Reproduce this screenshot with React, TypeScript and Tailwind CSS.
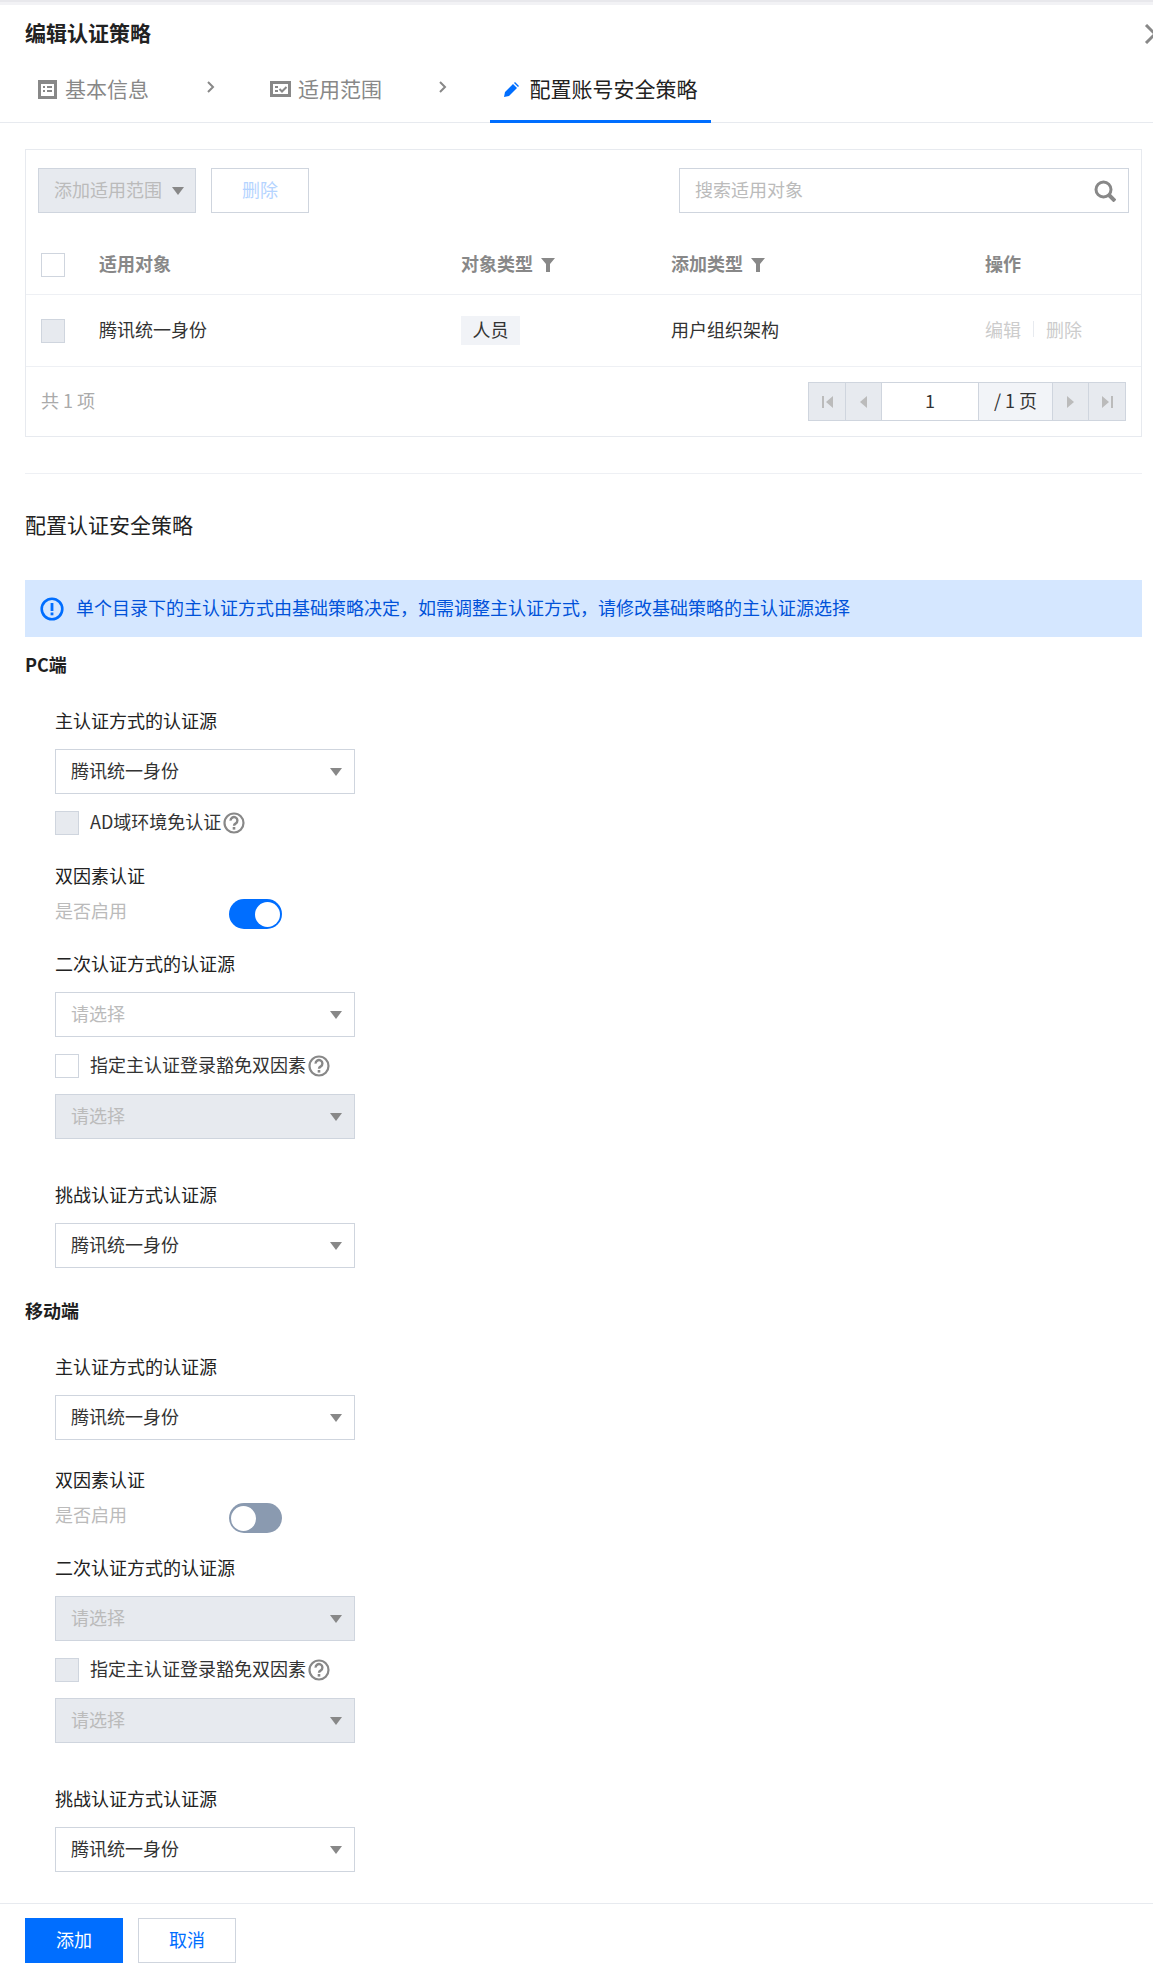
import type { ReactNode } from "react";

const font = "font-['Noto_Sans_CJK_SC','Liberation_Sans',sans-serif]";

const Caret = ({ className = "" }: { className?: string }) => (
  <svg width="12" height="8" viewBox="0 0 12 8" className={className}>
    <path d="M0 0h12L6 8z" fill="#888888" />
  </svg>
);

const Help = () => (
  <svg width="22" height="22" viewBox="0 0 22 22" className="ml-[2px] shrink-0">
    <circle cx="11" cy="11" r="9.5" fill="none" stroke="#888888" strokeWidth="2.2" />
    <path d="M7.6 8.6a3.4 3.4 0 1 1 5.2 2.8c-1.2.7-1.8 1.2-1.8 2.4" fill="none" stroke="#888888" strokeWidth="2.4" />
    <rect x="9.7" y="15" width="2.6" height="2.6" fill="#888888" />
  </svg>
);

const Filter = () => (
  <svg width="14" height="14" viewBox="0 0 14 14" className="ml-[8px] mt-[3px]">
    <path d="M0 0h14L9 6v8H5V6z" fill="#888888" />
  </svg>
);

const Checkbox = ({ disabled = false }: { disabled?: boolean }) => (
  <div className={`w-[24px] h-[24px] border border-[#cfd5de] shrink-0 ${disabled ? "bg-[#e7eaef]" : "bg-white"}`} />
);

const Select = ({ value, placeholder, disabled, className = "" }: { value?: string; placeholder?: string; disabled?: boolean; className?: string }) => (
  <div className={`w-[300px] h-[45px] border border-[#cfd5de] flex items-center justify-between pl-[15px] pr-[12px] ${disabled ? "bg-[#e7eaef]" : "bg-white"} ${className}`}>
    <span className={`pb-[3px] ${value ? "text-[#333333]" : "text-[#bbbbbb]"}`}>{value ?? placeholder}</span>
    <Caret />
  </div>
);

const Label = ({ children, className = "" }: { children: ReactNode; className?: string }) => (
  <div className={`h-[26px] leading-[23px] text-[#222222] ${className}`}>{children}</div>
);

const Section = ({ children, className = "" }: { children: ReactNode; className?: string }) => (
  <div className={`h-[26px] leading-[23px] font-bold text-[#1f1f1f] ${className}`}>{children}</div>
);

const Toggle = ({ on }: { on?: boolean }) => (
  <div className={`w-[53px] h-[30px] rounded-full flex items-center px-[2px] ${on ? "bg-[#006eff] justify-end" : "bg-[#8a9ab0] justify-start"}`}>
    <div className="w-[25px] h-[25px] rounded-full bg-white" />
  </div>
);

const ToggleRow = ({ on }: { on?: boolean }) => (
  <div className="mt-[9px] h-[30px] flex">
    <span className="w-[174px] text-[#bbbbbb] leading-[23px]">是否启用</span>
    <Toggle on={on} />
  </div>
);

const CheckRow = ({ text, disabled, className = "" }: { text: string; disabled?: boolean; className?: string }) => (
  <div className={`flex items-center h-[24px] ${className}`}>
    <Checkbox disabled={disabled} />
    <span className="ml-[11px] pb-[3px] text-[#333333]">{text}</span>
    <Help />
  </div>
);

const PagerBtn = ({ children, className = "" }: { children: ReactNode; className?: string }) => (
  <div className={`h-full flex items-center justify-center bg-[#e7eaef] border-r border-[#cfd5de] ${className}`}>{children}</div>
);

const StepChevron = ({ className = "" }: { className?: string }) => (
  <div className={`h-[52px] flex items-center ${className}`}>
    <svg width="8" height="12" viewBox="0 0 8 12" className="-mt-[4px]">
      <path d="M1 1l5 5-5 5" fill="none" stroke="#888888" strokeWidth="2" />
    </svg>
  </div>
);

export default function App() {
  return (
    <div className={`${font} w-[1153px] h-[1971px] overflow-hidden bg-white text-[18px]`}>
      <div className="h-[5px] bg-[#f2f2f5] border-t-2 border-[#e8e8ec]" />

      {/* Header */}
      <div className="h-[58px] pl-[25px] flex items-center justify-between">
        <h1 className="text-[21px] font-bold text-[#222222] pb-[2px]">编辑认证策略</h1>
        <svg width="18" height="20" viewBox="0 0 18 20" className="-mr-[9px]">
          <path d="M2 1l9 9-9 9" fill="none" stroke="#888888" strokeWidth="3" />
        </svg>
      </div>

      {/* Steps */}
      <div className="h-[60px] border-b border-[#e7eaef] flex text-[21px] pl-[38px]">
        <div className="flex items-center h-[52px] text-[#888888]">
          <svg width="19" height="19" viewBox="0 0 19 19" className="mr-[8px]">
            <path d="M0 0h19v19H0z" fill="#888888" />
            <path d="M3 4h13v12H3z" fill="#fff" />
            <path d="M5 6h2v2H5zM9 6h5v2H9zM5 10h2v2H5zM9 10h5v2H9z" fill="#888888" />
          </svg>
          基本信息
        </div>
        <StepChevron className="ml-[58px] mr-[55px]" />
        <div className="flex items-center h-[52px] text-[#888888]">
          <svg width="21" height="16" viewBox="0 0 21 16" className="mr-[7px]">
            <path d="M0 0h21v16H0z" fill="#888888" />
            <path d="M3 3h15v10H3z" fill="#fff" />
            <path d="M5 5h3v2H5zM5 9h3v2H5z" fill="#888888" />
            <path d="M9.5 8l2.5 2.5L16.5 6" fill="none" stroke="#888888" strokeWidth="2" />
          </svg>
          适用范围
        </div>
        <StepChevron className="ml-[57px] mr-[43px]" />
        <div className="w-[221px] h-[60px] border-b-[3px] border-[#006eff] pb-[5px] flex items-center justify-center text-[#222222]">
          <svg width="16" height="15" viewBox="0 0 16 15" className="mr-[10px]">
            <path d="M0 15l1-5 8-8 4 4-8 8zM10 1l1-1 4 4-1 1z" fill="#006eff" />
          </svg>
          配置账号安全策略
        </div>
      </div>

      <div className="pl-[25px] pr-[11px]">
        {/* Table card */}
        <div className="mt-[26px] border border-[#e7eaef] h-[288px]">
          <div className="mt-[18px] px-[12px] flex justify-between">
            <div className="flex">
              <div className="w-[158px] h-[45px] bg-[#e7eaef] border border-[#cfd5de] flex items-center pl-[15px] text-[#bbbbbb]">
                <span className="pb-[3px]">添加适用范围</span>
                <Caret className="ml-[10px]" />
              </div>
              <div className="ml-[15px] w-[98px] h-[45px] border border-[#cfd5de] flex items-center justify-center text-[#b5d4ff] pb-[3px]">删除</div>
            </div>
            <div className="w-[450px] h-[45px] border border-[#cfd5de] flex items-center justify-between pl-[15px] pr-[12px] text-[#bbbbbb]">
              <span className="pb-[3px]">搜索适用对象</span>
              <svg width="22" height="22" viewBox="0 0 22 22">
                <circle cx="9.5" cy="9.5" r="7.5" fill="none" stroke="#888888" strokeWidth="3" />
                <path d="M15 15l6 6" stroke="#888888" strokeWidth="4" />
              </svg>
            </div>
          </div>

          <div className="mt-[23px] h-[59px] border-b border-[#eef0f4] px-[15px] grid grid-cols-[58px_362px_210px_314px_1fr] items-center font-bold text-[#888888]">
            <Checkbox />
            <span className="pb-[3px]">适用对象</span>
            <span className="pb-[3px] flex items-center">对象类型<Filter /></span>
            <span className="pb-[3px] flex items-center">添加类型<Filter /></span>
            <span className="pb-[3px]">操作</span>
          </div>

          <div className="h-[72px] border-b border-[#eef0f4] px-[15px] grid grid-cols-[58px_362px_210px_314px_1fr] items-center text-[#333333]">
            <Checkbox disabled />
            <span className="pb-[3px]">腾讯统一身份</span>
            <span className="w-[59px] h-[29px] bg-[#f1f3f7] flex items-center justify-center pb-[3px]">人员</span>
            <span className="pb-[3px]">用户组织架构</span>
            <span className="pb-[3px] flex items-center text-[#cccccc]">
              编辑
              <span className="mx-[12px] w-px h-[16px] bg-[#e7eaef]" />
              删除
            </span>
          </div>

          <div className="h-[69px] pl-[15px] pr-[15px] flex items-center justify-between">
            <span className="text-[#aaaaaa] pb-[3px]">共 1 项</span>
            <div className="h-[39px] flex border border-[#cfd5de]">
              <PagerBtn className="w-[37px]">
                <svg width="11" height="12" viewBox="0 0 11 12"><path d="M0 0h2v12H0zM11 0v12L4 6z" fill="#bbbbbb" /></svg>
              </PagerBtn>
              <PagerBtn className="w-[36px]">
                <svg width="7" height="12" viewBox="0 0 7 12"><path d="M7 0v12L0 6z" fill="#bbbbbb" /></svg>
              </PagerBtn>
              <div className="w-[97px] h-full flex items-center justify-center bg-white border-r border-[#cfd5de] text-[#333333] pb-[2px]">1</div>
              <div className="w-[74px] h-full flex items-center justify-center bg-[#f2f4f8] border-r border-[#cfd5de] text-[#333333] pb-[2px]">/ 1 页</div>
              <PagerBtn className="w-[36px]">
                <svg width="7" height="12" viewBox="0 0 7 12"><path d="M0 0v12l7-6z" fill="#bbbbbb" /></svg>
              </PagerBtn>
              <PagerBtn className="w-[36px] border-r-0">
                <svg width="11" height="12" viewBox="0 0 11 12"><path d="M11 0H9v12h2zM0 0v12l7-6z" fill="#bbbbbb" /></svg>
              </PagerBtn>
            </div>
          </div>
        </div>

        <div className="mt-[36px] border-t border-[#eef0f4]" />
        <div className="mt-[35px] h-[30px] leading-[30px] text-[21px] text-[#222222]">配置认证安全策略</div>

        {/* Notice */}
        <div className="mt-[41px] h-[57px] bg-[#d5e7ff] flex items-center pl-[15px] text-[#0052d9]">
          <svg width="24" height="24" viewBox="0 0 24 24" className="mr-[12px]">
            <circle cx="12" cy="12" r="10.3" fill="none" stroke="#006eff" strokeWidth="2.6" />
            <rect x="10.6" y="6" width="2.8" height="8" fill="#006eff" />
            <rect x="10.6" y="15.5" width="2.8" height="2.8" fill="#006eff" />
          </svg>
          <span className="pb-[3px]">单个目录下的主认证方式由基础策略决定，如需调整主认证方式，请修改基础策略的主认证源选择</span>
        </div>

        {/* PC */}
        <Section className="mt-[16px]">PC端</Section>
        <div className="pl-[30px]">
          <Label className="mt-[30px]">主认证方式的认证源</Label>
          <Select value="腾讯统一身份" className="mt-[14px]" />
          <CheckRow text="AD域环境免认证" disabled className="mt-[17px]" />
          <Label className="mt-[29px]">双因素认证</Label>
          <ToggleRow on />
          <Label className="mt-[23px]">二次认证方式的认证源</Label>
          <Select placeholder="请选择" className="mt-[14px]" />
          <CheckRow text="指定主认证登录豁免双因素" className="mt-[17px]" />
          <Select placeholder="请选择" disabled className="mt-[16px]" />
          <Label className="mt-[44px]">挑战认证方式认证源</Label>
          <Select value="腾讯统一身份" className="mt-[14px]" />
        </div>

        {/* Mobile */}
        <Section className="mt-[31px]">移动端</Section>
        <div className="pl-[30px]">
          <Label className="mt-[30px]">主认证方式的认证源</Label>
          <Select value="腾讯统一身份" className="mt-[14px]" />
          <Label className="mt-[28px]">双因素认证</Label>
          <ToggleRow />
          <Label className="mt-[23px]">二次认证方式的认证源</Label>
          <Select placeholder="请选择" disabled className="mt-[14px]" />
          <CheckRow text="指定主认证登录豁免双因素" disabled className="mt-[17px]" />
          <Select placeholder="请选择" disabled className="mt-[16px]" />
          <Label className="mt-[44px]">挑战认证方式认证源</Label>
          <Select value="腾讯统一身份" className="mt-[14px]" />
        </div>
      </div>

      {/* Footer */}
      <div className="mt-[31px] border-t border-[#e7eaef] pl-[25px] pt-[14px] flex gap-[15px]">
        <div className="w-[98px] h-[45px] bg-[#006eff] text-white flex items-center justify-center pb-[3px]">添加</div>
        <div className="w-[98px] h-[45px] border border-[#cfd5de] text-[#006eff] flex items-center justify-center pb-[3px]">取消</div>
      </div>
    </div>
  );
}
